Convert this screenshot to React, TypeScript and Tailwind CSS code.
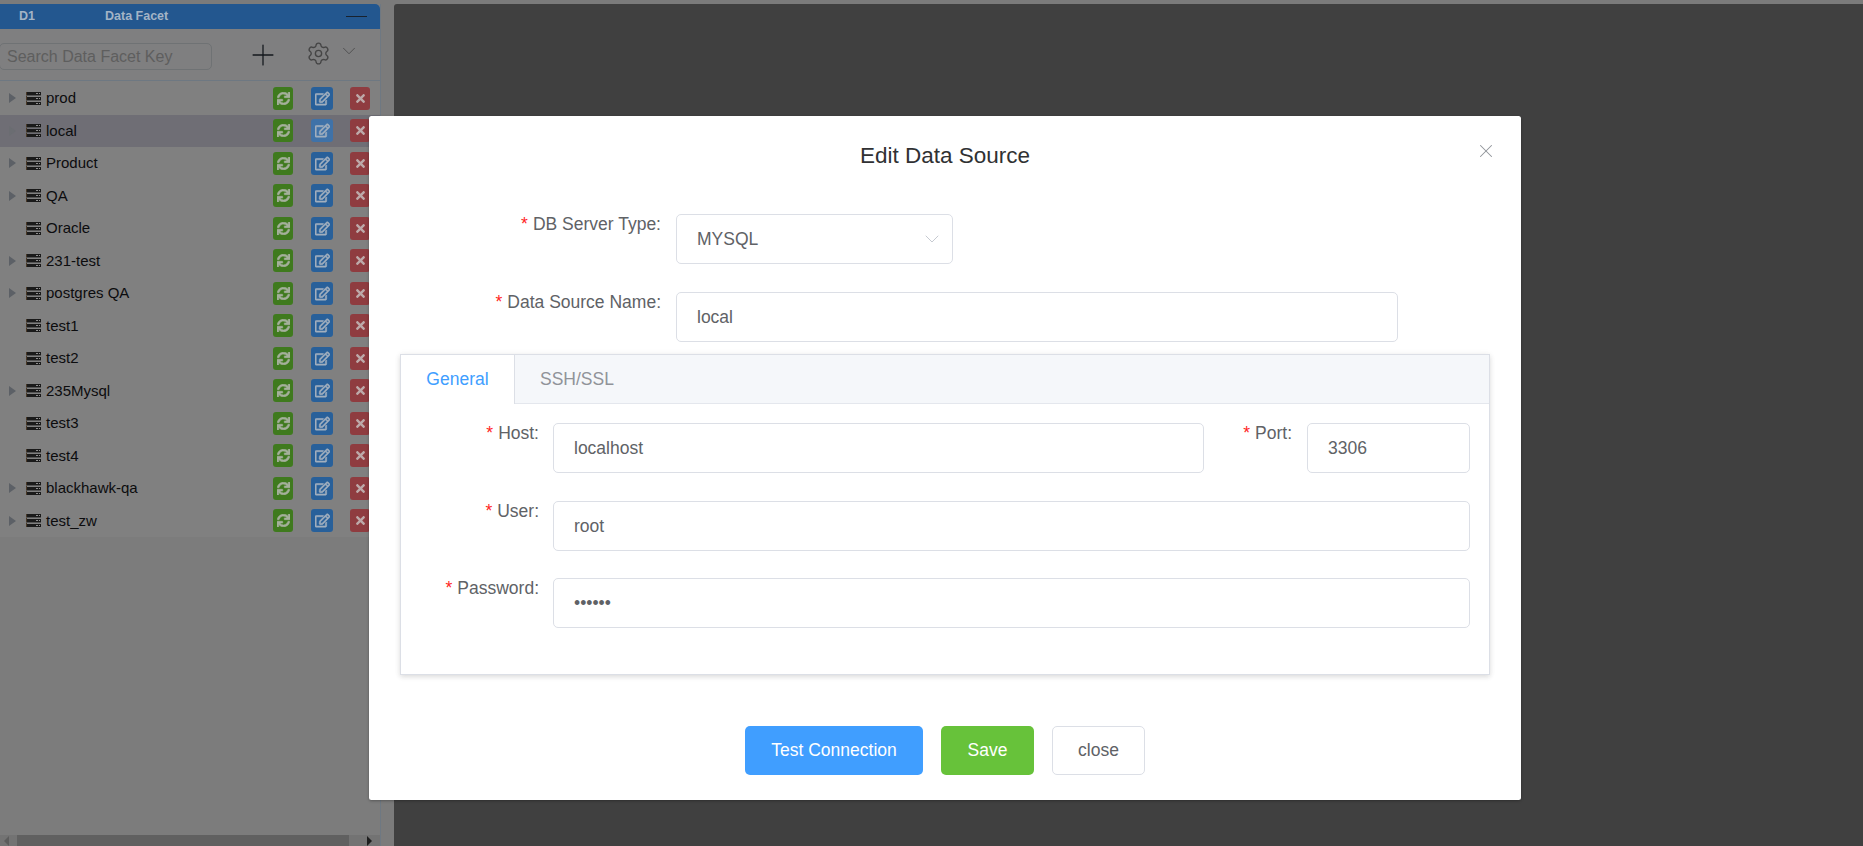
import { Settings, Plus, ChevronDown, X } from 'lucide-react';
import { FaSync, FaRegEdit, FaTimes } from 'react-icons/fa';

const rows = [
  { name: 'prod', arrow: true },
  { name: 'local', arrow: true, active: true },
  { name: 'Product', arrow: true },
  { name: 'QA', arrow: true },
  { name: 'Oracle', arrow: false },
  { name: '231-test', arrow: true },
  { name: 'postgres QA', arrow: true },
  { name: 'test1', arrow: false },
  { name: 'test2', arrow: false },
  { name: '235Mysql', arrow: true },
  { name: 'test3', arrow: false },
  { name: 'test4', arrow: false },
  { name: 'blackhawk-qa', arrow: true },
  { name: 'test_zw', arrow: true },
];

const ServerIcon = () => (
  <svg width="15" height="13" viewBox="0 0 15 13" className="shrink-0">
    <rect x="0" y="0" width="15" height="3" fill="#1a1a1a" />
    <rect x="0" y="5" width="15" height="3" fill="#1a1a1a" />
    <rect x="0" y="10" width="15" height="3" fill="#1a1a1a" />
    <rect x="0" y="0" width="1" height="13" fill="#4a3a28" />
    <rect x="0" y="3" width="15" height="1" fill="#555555" />
    <rect x="0" y="8" width="15" height="1" fill="#555555" />
    <rect x="10" y="1" width="2" height="1" fill="#8f8f8f" />
    <rect x="13" y="1" width="1" height="1" fill="#8f8f8f" />
    <rect x="10" y="6" width="2" height="1" fill="#8f8f8f" />
    <rect x="13" y="6" width="1" height="1" fill="#8f8f8f" />
    <rect x="10" y="11" width="2" height="1" fill="#8f8f8f" />
    <rect x="13" y="11" width="1" height="1" fill="#8f8f8f" />
  </svg>
);

const TreeRow = ({ name, arrow, active }: { name: string; arrow: boolean; active?: boolean }) => (
  <div className={`flex h-[32.5px] items-center pl-[9px] pr-[10px] ${active ? 'bg-[#6f6e75]' : ''}`}>
    <div className="w-[6px] shrink-0">
      {arrow && (
        <div
          className={`h-0 w-0 border-y-[5px] border-l-[7px] border-y-transparent ${
            active ? 'border-l-[#6b6d72]' : 'border-l-[#5c6066]'
          }`}
        />
      )}
    </div>
    <div className="ml-[11px]">
      <ServerIcon />
    </div>
    <span className="ml-[5px] text-[15px] text-[#0c0c0e]">{name}</span>
    <div className="ml-auto flex items-center">
      <div className="flex h-[23px] w-[20px] items-center justify-center rounded-[3px] bg-[#3f7a1e] text-[#a5b09c]">
        <FaSync size={13} className="[stroke-width:25]" />
      </div>
      <div
        className={`ml-[18px] flex h-[23px] w-[22px] items-center justify-center rounded-[3px] text-[#a3b0bf] ${
          active ? 'bg-[#3f72a8]' : 'bg-[#28609a]'
        }`}
      >
        <FaRegEdit size={15} className="[stroke-width:20]" />
      </div>
      <div className="ml-[17px] flex h-[23px] w-[20px] items-center justify-center rounded-[3px] bg-[#8f3c40] text-[#bda9a9]">
        <FaTimes size={13} />
      </div>
    </div>
  </div>
);

const Field = ({ value, type = 'text', className = '' }: { value: string; type?: string; className?: string }) => (
  <input
    readOnly
    type={type}
    value={value}
    className={`h-[50px] rounded-[5px] border border-[#dcdfe6] bg-white px-[20px] text-[17.5px] text-[#606266] outline-none ${className}`}
  />
);

const Label = ({ text, className = '' }: { text: string; className?: string }) => (
  <label className={`shrink-0 text-right text-[17.5px] leading-[20px] text-[#606266] ${className}`}>
    <span className="mr-[5px] text-[#ff1f1f]">*</span>
    {text}
  </label>
);

export default function App() {
  return (
    <div className="relative flex h-screen w-screen overflow-hidden bg-[#7b7b7b] pt-[4px] font-['Liberation_Sans',Arial,sans-serif]">
      {/* left panel */}
      <aside className="flex w-[381px] shrink-0 flex-col border-r border-[#6e7882] bg-[#7c7c7c]">
        <div className="flex h-[25px] shrink-0 items-center rounded-tr-[5px] bg-[#23578f] text-[12.5px] font-bold text-[#a3b4c6]">
          <span className="ml-[19px]">D1</span>
          <span className="ml-[70px]">Data Facet</span>
          <div className="ml-auto mr-[13px] h-[1.5px] w-[21px] bg-[#18222e]" />
        </div>
        <div className="flex h-[52px] shrink-0 items-center border-b border-[#6e7882] bg-[#7f7f80]">
          <input
            readOnly
            placeholder="Search Data Facet Key"
            className="-ml-[1px] mt-[4px] h-[27px] w-[213px] rounded-[5px] border border-[#6f7274] bg-transparent px-[7px] text-[16px] text-[#5e5e5e] outline-none placeholder:text-[#5e5e5e]"
          />
          <Plus size={34} strokeWidth={0.9} className="ml-[34px] shrink-0 text-[#14181d]" />
          <Settings size={25} strokeWidth={1.3} className="ml-[26px] -mt-[3px] shrink-0 text-[#454545]" />
          <ChevronDown size={22} strokeWidth={0.9} className="ml-[7px] -mt-[7px] shrink-0 text-[#484848]" />
        </div>
        <div className="shrink-0 bg-[#808080] pt-[1px]">
          {rows.map((r) => (
            <TreeRow key={r.name} name={r.name} arrow={r.arrow} active={r.active} />
          ))}
        </div>
        <div className="flex-1" />
        <div className="flex h-[11px] shrink-0 items-end bg-[#737373]">
          <div className="ml-[4px] h-0 w-0 border-y-[5px] border-r-[5px] border-y-transparent border-r-[#5c5c5c]" />
          <div className="ml-[8px] h-full w-[332px] bg-[#606060]" />
          <div className="ml-[18px] h-0 w-0 border-y-[5px] border-l-[5px] border-y-transparent border-l-[#1d1d1d]" />
        </div>
      </aside>

      {/* gutter + main area behind the dialog */}
      <div className="w-[13px] shrink-0" />
      <main className="flex-1 rounded-tl-[3px] bg-[#404040]" />

      {/* dialog */}
      <div className="absolute left-[369px] top-[116px] flex h-[684px] w-[1152px] flex-col rounded-[2.5px] bg-white shadow-[0_1px_3px_rgba(0,0,0,0.3)]">
        <div className="relative flex h-[79px] shrink-0 items-center justify-center">
          <span className="text-[22.5px] text-[#303133]">Edit Data Source</span>
          <X size={22} strokeWidth={1.1} className="absolute right-[24px] top-[24px] text-[#909399]" />
        </div>

        <div className="mt-[19px] flex">
          <Label text="DB Server Type:" className="w-[307px] pr-[15px]" />
          <div className="relative">
            <Field value="MYSQL" className="w-[277px]" />
            <ChevronDown
              size={24}
              strokeWidth={0.9}
              className="absolute right-[9px] top-[13px] text-[#c0c4cc]"
            />
          </div>
        </div>
        <div className="mt-[28px] flex">
          <Label text="Data Source Name:" className="w-[307px] pr-[15px]" />
          <Field value="local" className="w-[722px]" />
        </div>

        {/* tabs card */}
        <div className="mx-[31px] mt-[12px] h-[321px] border border-[#dcdfe6] bg-white shadow-[0_2px_5px_rgba(0,0,0,0.12),0_0_8px_rgba(0,0,0,0.04)]">
          <div className="flex h-[49px] border-b border-[#e4e7ed] bg-[#f5f7fa] text-[17.5px]">
            <div className="-mb-px flex w-[114px] items-center justify-center border-r border-[#dcdfe6] bg-white text-[#409eff]">
              General
            </div>
            <div className="flex items-center pl-[25px] text-[#909399]">SSH/SSL</div>
          </div>
          <div className="pr-[19px] pt-[19px]">
            <div className="flex">
              <Label text="Host:" className="w-[152px] pr-[14px]" />
              <Field value="localhost" className="w-[651px]" />
              <Label text="Port:" className="w-[103px] pr-[15px]" />
              <Field value="3306" className="min-w-0 flex-1" />
            </div>
            <div className="mt-[28px] flex">
              <Label text="User:" className="w-[152px] pr-[14px]" />
              <Field value="root" className="min-w-0 flex-1" />
            </div>
            <div className="mt-[27px] flex">
              <Label text="Password:" className="w-[152px] pr-[14px]" />
              <Field value="123456" type="password" className="min-w-0 flex-1" />
            </div>
          </div>
        </div>

        {/* footer buttons */}
        <div className="mb-[25px] mt-auto flex justify-center gap-[18px] text-[17.5px]">
          <button className="h-[49px] w-[178px] rounded-[5px] bg-[#409eff] text-white">Test Connection</button>
          <button className="h-[49px] w-[93px] rounded-[5px] bg-[#67c23a] text-white">Save</button>
          <button className="h-[49px] w-[93px] rounded-[5px] border border-[#dcdfe6] bg-white text-[#606266]">
            close
          </button>
        </div>
      </div>
    </div>
  );
}
